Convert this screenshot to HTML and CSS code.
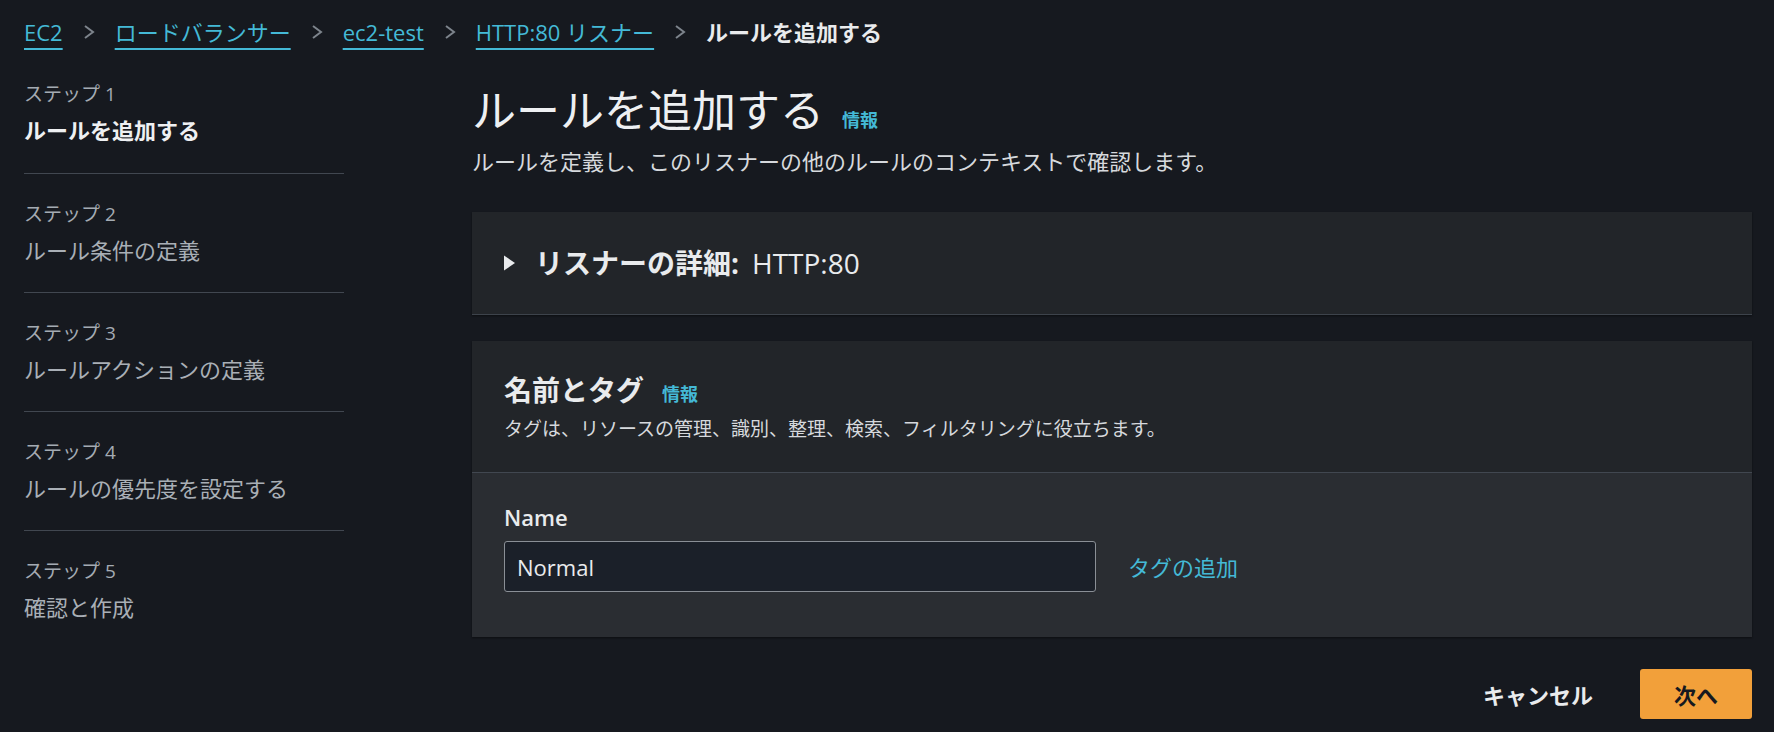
FILE: index.html
```html
<!DOCTYPE html>
<html lang="ja">
<head>
<meta charset="utf-8">
<title>ルールを追加する</title>
<link rel="stylesheet" href="styles.css">
</head>
<body>
<div class="page">
  <nav class="breadcrumbs">
    <a class="crumb-link" href="#">EC2</a>
    <svg class="chev" width="12" height="14" viewBox="0 0 12 14"><polyline points="2,1 10,7 2,13" fill="none" stroke="#7d848c" stroke-width="2"/></svg>
    <a class="crumb-link" href="#">ロードバランサー</a>
    <svg class="chev" width="12" height="14" viewBox="0 0 12 14"><polyline points="2,1 10,7 2,13" fill="none" stroke="#7d848c" stroke-width="2"/></svg>
    <a class="crumb-link" href="#">ec2-test</a>
    <svg class="chev" width="12" height="14" viewBox="0 0 12 14"><polyline points="2,1 10,7 2,13" fill="none" stroke="#7d848c" stroke-width="2"/></svg>
    <a class="crumb-link" href="#">HTTP:80 リスナー</a>
    <svg class="chev" width="12" height="14" viewBox="0 0 12 14"><polyline points="2,1 10,7 2,13" fill="none" stroke="#7d848c" stroke-width="2"/></svg>
    <span class="crumb-current">ルールを追加する</span>
  </nav>

  <div class="layout">
    <aside class="steps">
      <div class="step first">
        <div class="step-label">ステップ 1</div>
        <div class="step-title active">ルールを追加する</div>
      </div>
      <div class="step">
        <div class="step-label">ステップ 2</div>
        <div class="step-title">ルール条件の定義</div>
      </div>
      <div class="step">
        <div class="step-label">ステップ 3</div>
        <div class="step-title">ルールアクションの定義</div>
      </div>
      <div class="step">
        <div class="step-label">ステップ 4</div>
        <div class="step-title">ルールの優先度を設定する</div>
      </div>
      <div class="step">
        <div class="step-label">ステップ 5</div>
        <div class="step-title">確認と作成</div>
      </div>
    </aside>

    <main class="main">
      <header class="page-header">
        <h1 class="page-title">ルールを追加する<a class="info" href="#">情報</a></h1>
        <p class="page-desc">ルールを定義し、このリスナーの他のルールのコンテキストで確認します。</p>
      </header>

      <section class="card card-collapsed">
        <h2 class="expander">
          <svg class="caret" width="12" height="16" viewBox="0 0 12 16"><polygon points="0,0.5 11,8 0,15.5" fill="#e9ebed"/></svg>
          <span class="exp-title">リスナーの詳細:</span><span class="exp-value">HTTP:80</span>
        </h2>
      </section>

      <section class="card card-tags">
        <div class="card-header">
          <h2 class="card-title">名前とタグ<a class="info" href="#">情報</a></h2>
          <p class="card-desc">タグは、リソースの管理、識別、整理、検索、フィルタリングに役立ちます。</p>
        </div>
        <div class="card-body">
          <label class="field-label" for="name">Name</label>
          <div class="field-row">
            <input id="name" class="text-input" type="text" value="Normal">
            <a class="add-tag" href="#">タグの追加</a>
          </div>
        </div>
      </section>

      <div class="actions">
        <button class="btn-link" type="button">キャンセル</button>
        <button class="btn-primary" type="button">次へ</button>
      </div>
    </main>
  </div>
</div>
</body>
</html>
```

FILE: styles.css
```css
* { box-sizing: border-box; }

html, body {
  margin: 0;
  padding: 0;
  background: #16191f;
}

body {
  font-family: "Open Sans", "Noto Sans CJK JP", sans-serif;
  color: #e9ebed;
  width: 1774px;
  height: 732px;
  overflow: hidden;
}

.page {
  padding: 0 22px 0 24px;
}

/* Breadcrumbs */
.breadcrumbs {
  display: flex;
  align-items: center;
  height: 54px;
  padding-top: 10px;
  font-size: 22px;
  line-height: 28px;
}

.crumb-link {
  color: #44b9d6;
  text-decoration: underline;
  text-decoration-thickness: 2px;
  text-underline-offset: 7px;
  white-space: nowrap;
}

.chev {
  margin: 0 20px;
  flex: none;
}

.crumb-current {
  font-weight: 700;
  color: #e9ebed;
}

/* Layout */
.layout {
  display: grid;
  grid-template-columns: 320px 1fr;
  column-gap: 128px;
}

/* Steps nav */
.step {
  border-top: 1px solid #414750;
  padding: 27px 0 27px;
}

.step.first {
  border-top: none;
  padding-top: 27px;
  padding-bottom: 28px;
}

.step-label {
  font-size: 19px;
  line-height: 26px;
  color: #a4abb3;
}

.step-title {
  margin-top: 8px;
  font-size: 22px;
  line-height: 30px;
  color: #a9afb6;
}

.step-title.active {
  color: #eef0f2;
  font-weight: 700;
}

/* Main */
.page-header {
  padding-top: 28px;
}

.page-title {
  margin: 0;
  font-size: 44px;
  line-height: 56px;
  font-weight: 400;
  color: #eef0f2;
}

.info {
  color: #44b9d6;
  text-decoration: none;
  font-size: 18px;
  line-height: 1;
  font-weight: 700;
  margin-left: 18px;
}

.page-desc {
  margin: 8px 0 0;
  font-size: 22px;
  line-height: 30px;
  color: #d6d9dd;
}

.card {
  background: #222529;
  box-shadow: 0 1px 2px rgba(0, 0, 0, 0.45);
}

.card-collapsed {
  margin-top: 36px;
  padding: 33px 32px;
  border-bottom: 1px solid #3d434b;
}

.expander {
  margin: 0;
  display: flex;
  align-items: center;
  font-size: 28px;
  line-height: 36px;
  font-weight: 700;
}

.caret {
  flex: none;
  margin-right: 19px;
}

.exp-title { font-weight: 700; }

.exp-value {
  font-size: 28px;
  font-weight: 400;
  margin-left: 13px;
}

.card-tags {
  margin-top: 26px;
}

.card-header {
  padding: 31px 32px 30px;
  border-bottom: 1px solid #414750;
}

.card-title {
  margin: 0;
  font-size: 28px;
  line-height: 36px;
  font-weight: 700;
}

.card-desc {
  margin: 8px 0 0;
  font-size: 19px;
  line-height: 26px;
  color: #d6d9dd;
}

.card-body {
  background: #2a2d32;
  padding: 30px 32px 45px;
}

.field-label {
  display: block;
  font-size: 22px;
  line-height: 28px;
  font-weight: 600;
  color: #e9ebed;
}

.field-row {
  margin-top: 10px;
  display: flex;
  align-items: center;
  gap: 32px;
}

.text-input {
  width: 592px;
  height: 51px;
  padding: 0 12px;
  background: #1b2029;
  border: 1px solid #8a8f96;
  border-radius: 3px;
  color: #e9ebed;
  font-family: "Open Sans", "Noto Sans CJK JP", sans-serif;
  font-size: 22px;
  font-weight: 400;
  outline: none;
}

.add-tag {
  color: #44b9d6;
  text-decoration: none;
  font-size: 22px;
  line-height: 30px;
}

/* Actions */
.actions {
  margin-top: 32px;
  display: flex;
  justify-content: flex-end;
  align-items: center;
  gap: 22px;
}

.btn-link {
  background: none;
  border: none;
  padding: 0 25px;
  height: 50px;
  font-family: "Open Sans", "Noto Sans CJK JP", sans-serif;
  font-size: 22px;
  font-weight: 700;
  color: #e9ebed;
}

.btn-primary {
  width: 112px;
  height: 50px;
  background: #f2a03a;
  border: none;
  border-radius: 3px;
  font-family: "Open Sans", "Noto Sans CJK JP", sans-serif;
  font-size: 22px;
  font-weight: 700;
  color: #16191f;
}
```
